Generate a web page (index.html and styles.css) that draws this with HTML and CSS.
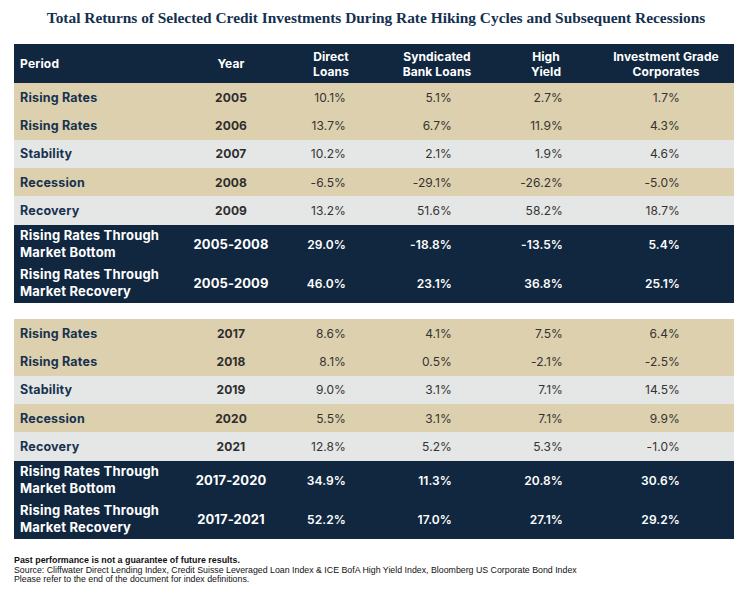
FILE: index.html
```html
<!DOCTYPE html>
<html>
<head>
<meta charset="utf-8">
<link rel="stylesheet" href="styles.css">
</head>
<body>
<h1 class="title">Total Returns of Selected Credit Investments During Rate Hiking Cycles and Subsequent Recessions</h1>
<div class="table">
  <div class="row head">
    <div class="c period">Period</div>
    <div class="c year">Year</div>
    <div class="c n1">Direct<br>Loans</div>
    <div class="c n2">Syndicated<br>Bank Loans</div>
    <div class="c n3">High<br>Yield</div>
    <div class="c n4">Investment Grade<br>Corporates</div>
  </div>
  <div class="row beige"><div class="c period">Rising Rates</div><div class="c year">2005</div><div class="c n1">10.1%</div><div class="c n2">5.1%</div><div class="c n3">2.7%</div><div class="c n4">1.7%</div></div>
  <div class="row beige"><div class="c period">Rising Rates</div><div class="c year">2006</div><div class="c n1">13.7%</div><div class="c n2">6.7%</div><div class="c n3">11.9%</div><div class="c n4">4.3%</div></div>
  <div class="row grey"><div class="c period">Stability</div><div class="c year">2007</div><div class="c n1">10.2%</div><div class="c n2">2.1%</div><div class="c n3">1.9%</div><div class="c n4">4.6%</div></div>
  <div class="row beige"><div class="c period">Recession</div><div class="c year">2008</div><div class="c n1">-6.5%</div><div class="c n2">-29.1%</div><div class="c n3">-26.2%</div><div class="c n4">-5.0%</div></div>
  <div class="row grey"><div class="c period">Recovery</div><div class="c year">2009</div><div class="c n1">13.2%</div><div class="c n2">51.6%</div><div class="c n3">58.2%</div><div class="c n4">18.7%</div></div>
  <div class="row dark"><div class="c period">Rising Rates Through<br>Market Bottom</div><div class="c year">2005-2008</div><div class="c n1">29.0%</div><div class="c n2">-18.8%</div><div class="c n3">-13.5%</div><div class="c n4">5.4%</div></div>
  <div class="row dark"><div class="c period">Rising Rates Through<br>Market Recovery</div><div class="c year">2005-2009</div><div class="c n1">46.0%</div><div class="c n2">23.1%</div><div class="c n3">36.8%</div><div class="c n4">25.1%</div></div>
  <div class="spacer"></div>
  <div class="row beige"><div class="c period">Rising Rates</div><div class="c year">2017</div><div class="c n1">8.6%</div><div class="c n2">4.1%</div><div class="c n3">7.5%</div><div class="c n4">6.4%</div></div>
  <div class="row beige"><div class="c period">Rising Rates</div><div class="c year">2018</div><div class="c n1">8.1%</div><div class="c n2">0.5%</div><div class="c n3">-2.1%</div><div class="c n4">-2.5%</div></div>
  <div class="row grey"><div class="c period">Stability</div><div class="c year">2019</div><div class="c n1">9.0%</div><div class="c n2">3.1%</div><div class="c n3">7.1%</div><div class="c n4">14.5%</div></div>
  <div class="row beige"><div class="c period">Recession</div><div class="c year">2020</div><div class="c n1">5.5%</div><div class="c n2">3.1%</div><div class="c n3">7.1%</div><div class="c n4">9.9%</div></div>
  <div class="row grey"><div class="c period">Recovery</div><div class="c year">2021</div><div class="c n1">12.8%</div><div class="c n2">5.2%</div><div class="c n3">5.3%</div><div class="c n4">-1.0%</div></div>
  <div class="row dark"><div class="c period">Rising Rates Through<br>Market Bottom</div><div class="c year">2017-2020</div><div class="c n1">34.9%</div><div class="c n2">11.3%</div><div class="c n3">20.8%</div><div class="c n4">30.6%</div></div>
  <div class="row dark"><div class="c period">Rising Rates Through<br>Market Recovery</div><div class="c year">2017-2021</div><div class="c n1">52.2%</div><div class="c n2">17.0%</div><div class="c n3">27.1%</div><div class="c n4">29.2%</div></div>
</div>
<div class="notes">
  <p class="bold">Past performance is not a guarantee of future results.</p>
  <p>Source: Cliffwater Direct Lending Index, Credit Suisse Leveraged Loan Index &amp; ICE BofA High Yield Index, Bloomberg US Corporate Bond Index</p>
  <p>Please refer to the end of the document for index definitions.</p>
</div>
</body>
</html>
```

FILE: styles.css
```css
html, body {
  margin: 0;
  padding: 0;
  background: #ffffff;
}
body {
  width: 752px;
  height: 607px;
  overflow: hidden;
}
.title {
  margin: 9px 0 0 0;
  height: 35px;
  font-family: "Liberation Serif", "Times New Roman", serif;
  font-weight: 700;
  font-size: 15.4px;
  line-height: 18px;
  color: #14304f;
  text-align: center;
  letter-spacing: 0;
}
.table {
  margin: 0 18px 0 14px;
  width: 720px;
  font-family: "Inter", "Noto Sans", sans-serif;
}
.row {
  display: grid;
  grid-template-columns: 176px 82px 118px 94px 124px 126px;
  align-items: center;
  height: 28.34px;
}
.row.head {
  height: 39px;
  background: #10273f;
  color: #ffffff;
  font-weight: 700;
  font-size: 12px;
  line-height: 15px;
}
.row.beige { background: #ddd0ae; }
.row.grey { background: #e5e6e6; }
.row.dark {
  height: 39px;
  background: #10273f;
  color: #ffffff;
}
.spacer { height: 16.3px; }
.c {
  font-size: 12px;
  line-height: 15px;
  color: #333333;
  letter-spacing: 0.1px;
}
.row.dark .c, .row.head .c { color: #ffffff; }
.c.period {
  padding-left: 6px;
  font-weight: 700;
  color: #17324f;
  font-size: 12.5px;
  line-height: 17px;
  letter-spacing: 0.2px;
}
.row.dark .c.period { font-size: 13px; }
.c.year {
  text-align: center;
  font-weight: 700;
  color: #2d2d2d;
}
.row.dark .c.year { font-size: 13px; }
.c.n1, .c.n2, .c.n3, .c.n4 { text-align: right; }
.c.n1 { padding-right: 44px; }
.c.n2 { padding-right: 32px; }
.c.n3 { padding-right: 45px; }
.c.n4 { padding-right: 54px; }
.row.dark .c.n1, .row.dark .c.n2, .row.dark .c.n3, .row.dark .c.n4 { font-weight: 600; }
.row.head .c { text-align: center; padding-right: 0; font-size: 12px; color: #ffffff; }
.row.head .c.period { text-align: left; padding-left: 6px; }
.row.head .c.n4 { padding-right: 10px; }
.notes {
  margin: 16px 0 0 14px;
  font-family: "Liberation Sans", Arial, sans-serif;
  font-size: 8.8px;
  line-height: 9.5px;
  color: #111111;
}
.notes p { margin: 0; }
.notes .bold { font-weight: 700; font-size: 8.9px; line-height: 11px; }
```
